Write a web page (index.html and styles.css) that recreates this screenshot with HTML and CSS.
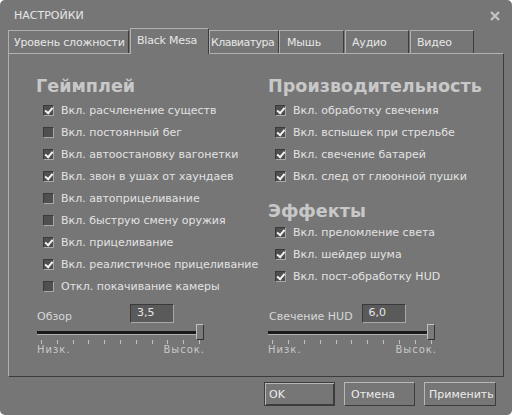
FILE: index.html
```html
<!DOCTYPE html>
<html>
<head>
<meta charset="utf-8">
<link rel="stylesheet" href="styles.css">
</head>
<body>
<div class="dialog">
  <div class="titlebar">
    <span class="title">НАСТРОЙКИ</span>
    <svg class="close" width="10" height="10" viewBox="0 0 10 10"><path d="M1 1 L9 9 M9 1 L1 9" stroke="#c4c4c4" stroke-width="2.2" fill="none"/></svg>
  </div>
  <div class="tabs">
    <div class="tab t1">Уровень сложности</div>
    <div class="tab active t2">Black Mesa</div>
    <div class="tab t3">Клавиатура</div>
    <div class="tab t4">Мышь</div>
    <div class="tab t5">Аудио</div>
    <div class="tab t6">Видео</div>
  </div>
  <div class="panel">
    <div class="cols">
      <div class="col left">
        <h2 class="heading">Геймплей</h2>
        <div class="row"><span class="cb on"></span>Вкл. расчленение существ</div>
        <div class="row"><span class="cb"></span>Вкл. постоянный бег</div>
        <div class="row"><span class="cb on"></span>Вкл. автоостановку вагонетки</div>
        <div class="row"><span class="cb on"></span>Вкл. звон в ушах от хаундаев</div>
        <div class="row"><span class="cb"></span>Вкл. автоприцеливание</div>
        <div class="row"><span class="cb"></span>Вкл. быструю смену оружия</div>
        <div class="row"><span class="cb on"></span>Вкл. прицеливание</div>
        <div class="row"><span class="cb on"></span>Вкл. реалистичное прицеливание</div>
        <div class="row"><span class="cb"></span>Откл. покачивание камеры</div>
      </div>
      <div class="col right">
        <h2 class="heading">Производительность</h2>
        <div class="row"><span class="cb on"></span>Вкл. обработку свечения</div>
        <div class="row"><span class="cb on"></span>Вкл. вспышек при стрельбе</div>
        <div class="row"><span class="cb on"></span>Вкл. свечение батарей</div>
        <div class="row"><span class="cb on"></span>Вкл. след от глюонной пушки</div>
        <h2 class="heading h-eff">Эффекты</h2>
        <div class="row"><span class="cb on"></span>Вкл. преломление света</div>
        <div class="row"><span class="cb on"></span>Вкл. шейдер шума</div>
        <div class="row"><span class="cb on"></span>Вкл. пост-обработку HUD</div>
      </div>
    </div>
    <div class="sliders">
      <div class="slider s-left">
        <div class="s-head"><span class="s-label">Обзор</span><span class="s-value v-left">3,5</span></div>
        <div class="track"><span class="thumb"></span></div>
        <div class="ticks">
          <i></i><i></i><i></i><i></i><i></i><i></i><i></i><i></i><i></i><i></i><i></i>
        </div>
        <div class="s-range"><span>Низк.</span><span>Высок.</span></div>
      </div>
      <div class="slider s-right">
        <div class="s-head"><span class="s-label">Свечение HUD</span><span class="s-value v-right">6,0</span></div>
        <div class="track"><span class="thumb"></span></div>
        <div class="ticks">
          <i></i><i></i><i></i><i></i><i></i><i></i><i></i><i></i><i></i><i></i><i></i>
        </div>
        <div class="s-range"><span>Низк.</span><span>Высок.</span></div>
      </div>
    </div>
  </div>
  <div class="buttons">
    <div class="btn default">OK</div>
    <div class="btn b-cancel">Отмена</div>
    <div class="btn b-apply">Применить</div>
  </div>
</div>
</body>
</html>
```
FILE: styles.css
```css
html, body {
  margin: 0;
  padding: 0;
  background: #ffffff;
}
.dialog {
  width: 512px;
  height: 415px;
  background: #767676;
  border-radius: 5px;
  overflow: hidden;
  font-family: "DejaVu Sans", Verdana, sans-serif;
  font-size: 11px;
  color: #e2e2e2;
}
.titlebar {
  height: 28px;
  display: flex;
  align-items: center;
  justify-content: space-between;
  padding: 0 12px 0 14px;
  box-sizing: border-box;
}
.title {
  font-size: 11px;
  color: #e6e6e6;
  padding-top: 3px;
}
.close {
  display: block;
  margin-top: 4px;
}
.tabs {
  display: flex;
  align-items: flex-end;
  height: 25px;
  padding-left: 8px;
  position: relative;
  z-index: 1;
}
.tab {
  height: 23px;
  box-sizing: border-box;
  border-top: 1px solid #b0b0b0;
  border-left: 1px solid #b0b0b0;
  border-right: 1px solid #3c3c3c;
  padding-left: 6px;
  display: flex;
  align-items: center;
  color: #e6e6e6;
  font-size: 11px;
  letter-spacing: -0.2px;
  white-space: nowrap;
}
.tab.active {
  height: 26px;
  margin-bottom: -1px;
  background: #767676;
  padding-bottom: 2px;
}
.t1 { width: 121px; margin-right: 1px; padding-left: 5px; }
.t2 { width: 79px; }
.t3 { width: 70px; padding-left: 1px; letter-spacing: -0.55px; }
.t4 { width: 65px; margin-right: 1px; padding-left: 7px; }
.t5 { width: 64px; margin-right: 1px; padding-left: 6px; }
.t6 { width: 64px; padding-left: 6px; }
.panel {
  margin-left: 8px;
  width: 496px;
  height: 324px;
  box-sizing: border-box;
  border-top: 1px solid #b0b0b0;
  border-left: 1px solid #b0b0b0;
  border-right: 1px solid #3c3c3c;
  border-bottom: 1px solid #3c3c3c;
  padding: 20px 0 0 27px;
}
.cols {
  display: grid;
  grid-template-columns: 232px 220px;
}
.heading {
  margin: 0 0 1px 0;
  font-size: 17.6px;
  font-weight: bold;
  color: #c8c8c8;
  height: 24px;
  line-height: 24px;
}
.h-eff {
  margin-top: 12px;
  margin-bottom: -2px;
}
.row {
  height: 22px;
  display: flex;
  align-items: center;
  padding-left: 7px;
  color: #e2e2e2;
  font-size: 11px;
  white-space: nowrap;
}
.cb {
  width: 11px;
  height: 11px;
  box-sizing: border-box;
  background: #4f4f4f;
  border-top: 1px solid #3a3a3a;
  border-left: 1px solid #3a3a3a;
  border-right: 1px solid #a8a8a8;
  border-bottom: 1px solid #a8a8a8;
  margin-right: 7px;
  position: relative;
  flex: none;
}
.cb.on::after {
  content: "";
  position: absolute;
  left: 1px;
  top: 0px;
  width: 3px;
  height: 6px;
  border-right: 2px solid #f2f2f2;
  border-bottom: 2px solid #f2f2f2;
  transform: rotate(40deg) translate(1px, -1px);
}
.sliders {
  display: grid;
  grid-template-columns: 232px 220px;
  margin-top: 6px;
}
.s-head {
  display: flex;
  align-items: center;
  height: 20px;
  padding-left: 1px;
}
.s-label {
  color: #d8d8d8;
  font-size: 11px;
  padding-top: 6px;
}
.s-value {
  width: 44px;
  height: 19px;
  box-sizing: border-box;
  background: #5a5a5a;
  border-top: 1px solid #3a3a3a;
  border-left: 1px solid #3a3a3a;
  border-right: 1px solid #a8a8a8;
  border-bottom: 1px solid #a8a8a8;
  padding-left: 6px;
  line-height: 16px;
  font-size: 11px;
  color: #e6e6e6;
}
.v-left { margin-left: 58px; }
.v-right { margin-left: 9px; }
.track {
  margin-top: 8px;
  height: 3px;
  background: #1a1a1a;
  border-bottom: 1px solid #b0b0b0;
  position: relative;
}
.s-left .track { width: 167px; margin-left: 1px; }
.s-right .track { width: 167px; }
.thumb {
  position: absolute;
  right: 0;
  top: -7px;
  width: 8px;
  height: 16px;
  box-sizing: border-box;
  background: #7a7a7a;
  border-top: 1px solid #c0c0c0;
  border-left: 1px solid #c0c0c0;
  border-right: 1px solid #333;
  border-bottom: 1px solid #333;
}
.ticks {
  display: flex;
  justify-content: space-between;
  margin-top: 5px;
  height: 4px;
}
.s-left .ticks { width: 159px; margin-left: 5px; }
.s-right .ticks { width: 160px; margin-left: 4px; }
.ticks i {
  display: block;
  width: 1px;
  height: 4px;
  background: #c0c0c0;
}
.s-range {
  display: flex;
  justify-content: space-between;
  font-size: 10px;
  color: #c8c8c8;
  letter-spacing: 1px;
}
.s-left .s-range { width: 168px; margin-left: 1px; }
.s-right .s-range { width: 169px; }
.buttons {
  display: flex;
  justify-content: flex-end;
  gap: 9px;
  padding: 5px 16px 0 0;
}
.btn {
  width: 71px;
  height: 24px;
  box-sizing: border-box;
  border-top: 1px solid #b8b8b8;
  border-left: 1px solid #b8b8b8;
  border-right: 1px solid #3c3c3c;
  border-bottom: 1px solid #3c3c3c;
  display: flex;
  align-items: center;
  padding-left: 6px;
  font-size: 11px;
  color: #ececec;
}
.b-apply { width: 72px; padding-left: 4px; }
.btn.default {
  border: 1px solid #3c3c3c;
  box-shadow: inset 1px 1px 0 #b8b8b8, inset -1px -1px 0 #3c3c3c;
  padding-left: 4px;
}
```
